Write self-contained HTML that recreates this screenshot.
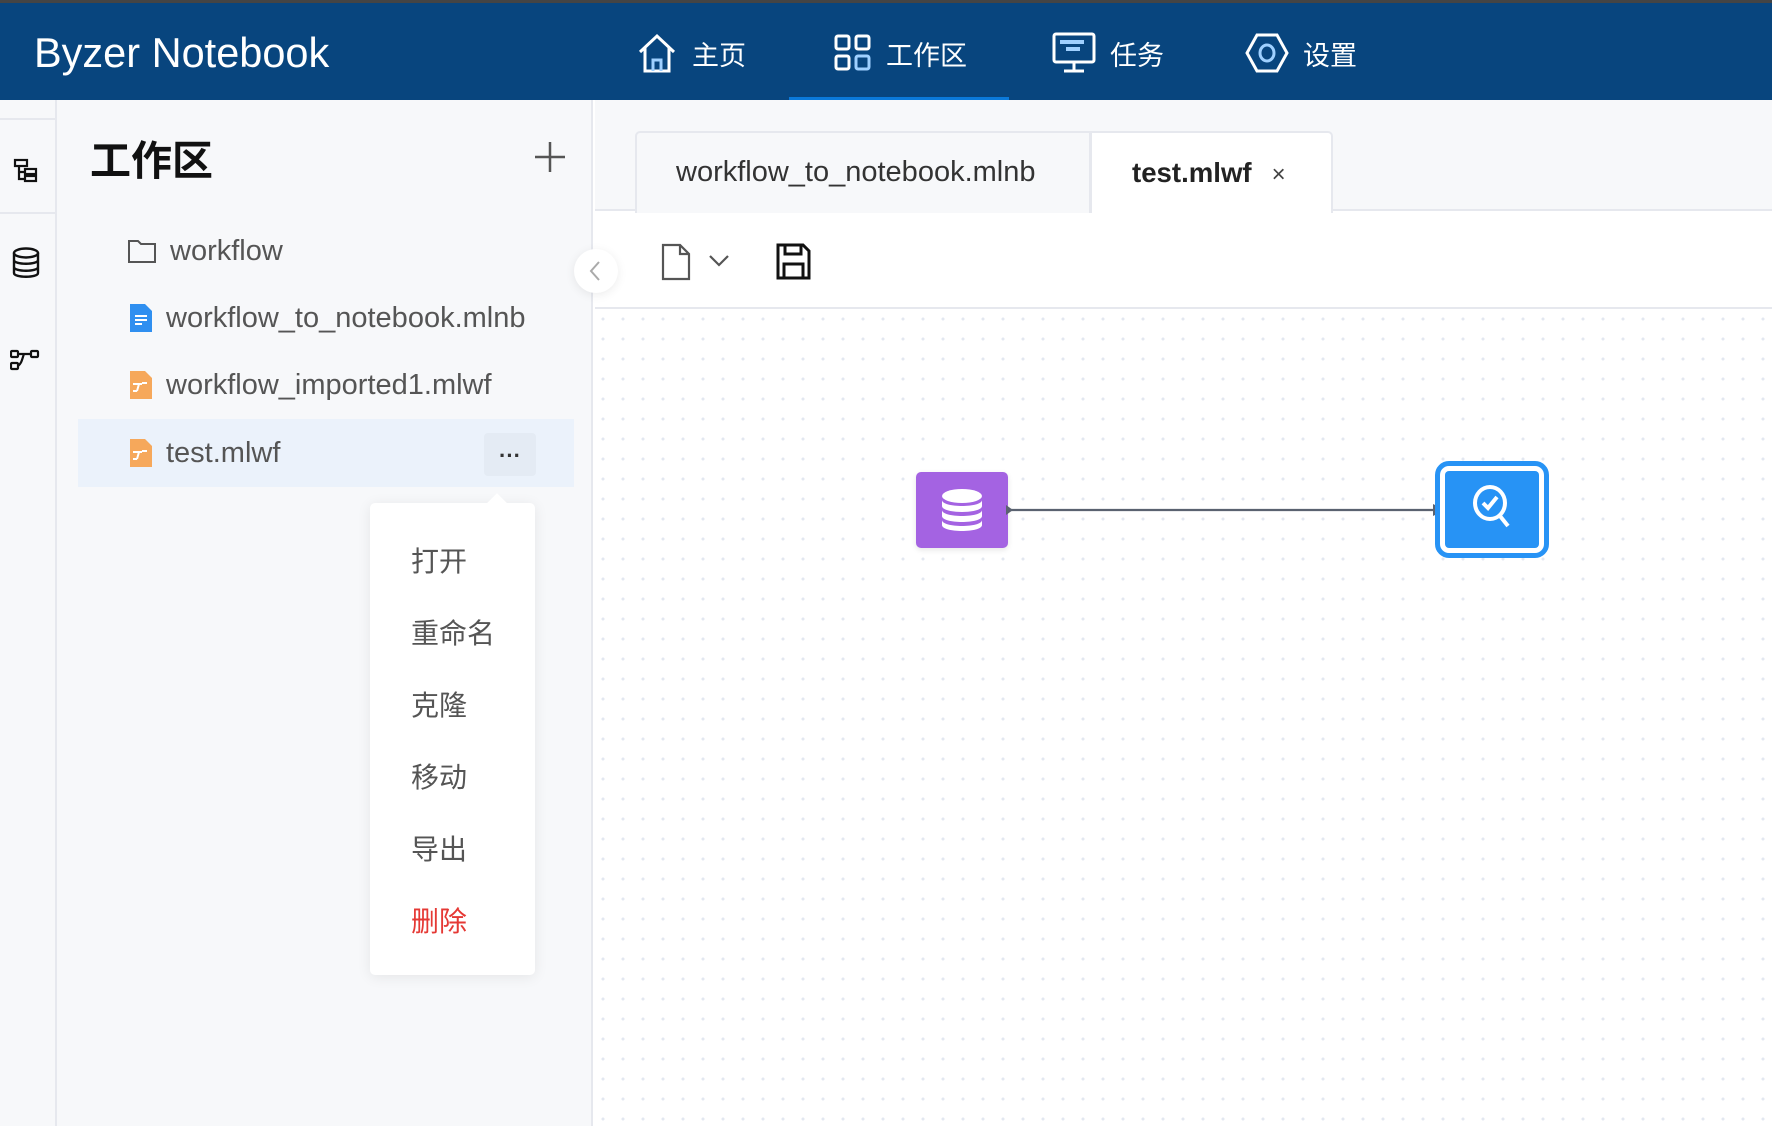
<!DOCTYPE html>
<html><head><meta charset="utf-8"><style>
*{margin:0;padding:0;box-sizing:border-box}
body{width:1772px;height:1126px;overflow:hidden;position:relative;background:#fff;font-family:"Liberation Sans","Noto Sans CJK SC",sans-serif;}
.abs{position:absolute}
#top{left:0;top:0;width:1772px;height:100px;background:#08457e;border-top:3px solid #444}
.nav{position:absolute;top:30px;height:40px;display:flex;align-items:center;color:#fff;font-size:27px}
.nav svg{margin-right:14px}
#rail{left:0;top:100px;width:57px;height:1026px;background:#f7f8fa;border-right:2px solid #e6e8ee}
#side{left:57px;top:100px;width:536px;height:1026px;background:#f7f8fa;border-right:2px solid #e6e8ee}
.item{position:absolute;left:110px;font-size:29px;color:#555;display:flex;align-items:center;height:40px}
.item svg{margin-right:14px}
.menu div{position:absolute;left:41px;font-size:28px;color:#555}
</style></head><body>
<div id="top" class="abs">
  <div class="abs" style="left:34px;top:26px;color:#fff;font-size:41.5px;">Byzer Notebook</div>
  <div class="nav" style="left:636px">
    <svg width="42" height="42" viewBox="0 0 42 42" fill="none" stroke="#fff" stroke-width="3"><path d="M4 20 L21 4 L38 20 M9 16 V39 H33 V16"/><path d="M17 39 V28 H25 V39" stroke="#9fd0ff"/></svg>主页</div>
  <div class="nav" style="left:834px">
    <svg width="38" height="38" viewBox="0 0 38 38" fill="none" stroke="#fff" stroke-width="3"><rect x="2" y="2" width="13" height="13" rx="2"/><rect x="22" y="2" width="13" height="13" rx="2"/><rect x="2" y="22" width="13" height="13" rx="2"/><rect x="22" y="22" width="13" height="13" rx="2" stroke="#9fd0ff"/></svg>工作区</div>
  <div class="nav" style="left:1052px">
    <svg width="44" height="42" viewBox="0 0 44 42" fill="none" stroke="#fff" stroke-width="3"><rect x="2" y="2" width="40" height="28" rx="2"/><path d="M22 30 V39 M12 39 H32"/><path d="M8 10 H32 M14 17 H28" stroke="#9fd0ff" stroke-width="4"/></svg>任务</div>
  <div class="nav" style="left:1245px">
    <svg width="44" height="42" viewBox="0 0 44 42" fill="none" stroke="#fff" stroke-width="3"><path d="M12 3 H32 L42 21 L32 39 H12 L2 21 Z"/><ellipse cx="22" cy="21" rx="7" ry="8" stroke="#9fd0ff"/></svg>设置</div>
  <div class="abs" style="left:789px;top:94px;width:220px;height:4px;background:#0b79d9"></div>
</div>

<div id="rail" class="abs">
  <div class="abs" style="left:0;top:0;width:57px;height:20px;border-bottom:2px solid #e6e8ee;border-right:2px solid #e6e8ee"></div>
  <div class="abs" style="left:0;top:112px;width:57px;height:2px;background:#e6e8ee"></div>
  <svg class="abs" style="left:13px;top:58px" width="26" height="26" viewBox="0 0 26 26" fill="none" stroke="#111" stroke-width="2.2"><rect x="2" y="2" width="12" height="6"/><rect x="12" y="11" width="11" height="5"/><rect x="12" y="18" width="11" height="5"/><path d="M6 8 V21 H12 M6 14 H12"/></svg>
  <svg class="abs" style="left:11px;top:147px" width="30" height="32" viewBox="0 0 30 32" fill="none" stroke="#111" stroke-width="2.4"><ellipse cx="15" cy="6" rx="12" ry="4.5"/><path d="M3 6 V26 C3 31 27 31 27 26 V6 M3 13 C3 18 27 18 27 13 M3 20 C3 25 27 25 27 20"/></svg>
  <svg class="abs" style="left:10px;top:249px" width="30" height="22" viewBox="0 0 30 22" fill="none" stroke="#111" stroke-width="2.2"><rect x="1" y="2" width="7" height="6" rx="1"/><rect x="1" y="14" width="7" height="6" rx="1"/><rect x="21" y="2" width="7" height="6" rx="1"/><path d="M8 5 H21 M14 5 C12 10 12 14 8 17"/></svg>
</div>

<div id="side" class="abs">
  <div class="abs" style="left:33px;top:27px;font-size:41px;font-weight:bold;color:#111">工作区</div>
  <svg class="abs" style="left:477px;top:41px" width="32" height="32" viewBox="0 0 32 32" stroke="#555" stroke-width="2.5"><path d="M16 1 V31 M1 16 H31"/></svg>
  <div class="item" style="top:131px;left:71px"><svg width="28" height="24" viewBox="0 0 28 24" fill="none" stroke="#555" stroke-width="2"><path d="M1 2 H10 L13 5 H27 V23 H1 Z"/></svg>workflow</div>
  <div class="item" style="top:198px;left:73px"><svg width="22" height="28" viewBox="0 0 22 28"><path d="M0 0 H15 L22 7 V28 H0Z" fill="#2f8ff0"/><path d="M5 12 H17 M5 16 H17 M5 20 H12" stroke="#fff" stroke-width="2"/></svg>workflow_to_notebook.mlnb</div>
  <div class="item" style="top:265px;left:73px"><svg width="22" height="28" viewBox="0 0 22 28"><path d="M0 0 H15 L22 7 V28 H0Z" fill="#f6a85b"/><path d="M3 13 H7 M12 12 H17 M7 13 H12 M9 13 L7 20 M3 20 H7" stroke="#fff" stroke-width="2"/></svg>workflow_imported1.mlwf</div>
  <div class="abs" style="left:21px;top:319px;width:496px;height:68px;background:#ebf2fb"></div>
  <div class="abs" style="left:427px;top:333px;width:52px;height:43px;background:#e4ebf4;border-radius:4px;text-align:center;font-size:22px;line-height:46px;color:#333;font-weight:bold">···</div>
  <div class="item" style="top:333px;left:73px"><svg width="22" height="28" viewBox="0 0 22 28"><path d="M0 0 H15 L22 7 V28 H0Z" fill="#f6a85b"/><path d="M3 13 H7 M12 12 H17 M7 13 H12 M9 13 L7 20 M3 20 H7" stroke="#fff" stroke-width="2"/></svg>test.mlwf</div>
</div>

<div class="abs menu" style="left:370px;top:503px;width:165px;height:472px;background:#fff;border-radius:5px;box-shadow:0 2px 14px rgba(0,0,0,0.08)">
  <div class="abs" style="left:120px;top:-7px;width:14px;height:14px;background:#fff;transform:rotate(45deg)"></div>
  <div style="top:37px">打开</div>
  <div style="top:109px">重命名</div>
  <div style="top:181px">克隆</div>
  <div style="top:253px">移动</div>
  <div style="top:325px">导出</div>
  <div style="top:397px;color:#e53935">删除</div>
</div>

<!-- main -->
<div class="abs" style="left:595px;top:100px;width:1177px;height:111px;background:#f7f8fa;border-bottom:2px solid #e6e8ee"></div>
<div class="abs" style="left:635px;top:131px;width:456px;height:82px;background:#f7f8fa;border:2px solid #e6e8ee;border-bottom:none;border-radius:5px 0 0 0;font-size:29px;color:#333;padding:23px 0 0 39px">workflow_to_notebook.mlnb</div>
<div class="abs" style="left:1090px;top:131px;width:243px;height:82px;background:#fff;border:2px solid #e6e8ee;border-bottom:none;border-radius:0 5px 0 0;font-size:27.6px;color:#222;font-weight:bold;padding:24px 0 0 40px">test.mlwf<span style="font-weight:normal;font-size:24px;color:#444;margin-left:20px">×</span></div>
<div class="abs" style="left:595px;top:213px;width:1177px;height:96px;background:#fff;border-bottom:2px solid #e6e8ee"></div>
<svg class="abs" style="left:661px;top:243px" width="30" height="38" viewBox="0 0 30 38" fill="none" stroke="#555" stroke-width="2.2"><path d="M2 2 H19 L28 11 V36 H2 Z M19 2 V11 H28"/></svg>
<svg class="abs" style="left:708px;top:254px" width="22" height="14" viewBox="0 0 22 14" fill="none" stroke="#555" stroke-width="2.2"><path d="M2 2 L11 11 L20 2"/></svg>
<svg class="abs" style="left:776px;top:243px" width="35" height="37" viewBox="0 0 35 37" fill="none" stroke="#111" stroke-width="3"><path d="M2 2 H27 L33 8 V35 H2 Z"/><path d="M9 2 V11 H25 V2 M8 35 V21 H27 V35"/></svg>
<div class="abs" style="left:595px;top:310px;width:1177px;height:816px;background-color:#fff;background-image:radial-gradient(circle,#e3e8f1 1.4px,transparent 1.6px);background-size:20px 20px;background-position:-2px -1px"></div>
<div class="abs" style="left:574px;top:249px;width:44px;height:44px;border-radius:50%;background:#fff;box-shadow:0 2px 10px rgba(0,0,0,0.08)"><svg width="44" height="44" viewBox="0 0 44 44" fill="none" stroke="#aaa" stroke-width="2"><path d="M25 13 L17 22 L25 31"/></svg></div>

<div class="abs" style="left:916px;top:472px;width:92px;height:76px;background:#a463e2;border-radius:5px;box-shadow:0 2px 6px rgba(0,0,0,0.1)">
<svg class="abs" style="left:25px;top:16px" width="42" height="44" viewBox="0 0 42 44" fill="#fff"><ellipse cx="21" cy="8" rx="20" ry="7"/><path d="M1 12 C1 20 41 20 41 12 V18 C41 26 1 26 1 18Z M1 22 C1 30 41 30 41 22 V28 C41 36 1 36 1 28Z M1 32 C1 40 41 40 41 32 V37 C41 45 1 45 1 37Z"/></svg></div>
<svg class="abs" style="left:1006px;top:502px" width="440" height="16" viewBox="0 0 440 16"><path d="M0 3 L7 8 L0 13Z" fill="#5a6270"/><path d="M4 8 H430" stroke="#5a6270" stroke-width="2.2"/><path d="M427 2 L439 8 L427 14Z" fill="#5a6270"/></svg>
<div class="abs" style="left:1435px;top:461px;width:114px;height:97px;border:5px solid #2793f5;border-radius:14px;background:#fff">
 <div class="abs" style="left:5px;top:5px;width:94px;height:77px;background:#2793f5;border-radius:4px">
 <svg class="abs" style="left:27px;top:14px" width="44" height="48" viewBox="0 0 44 48" fill="none" stroke="#fff" stroke-width="4"><ellipse cx="18" cy="18" rx="15" ry="16"/><path d="M11 18 L16 23 L25 12"/><path d="M28 31 L36 41"/></svg></div></div>
</body></html>
